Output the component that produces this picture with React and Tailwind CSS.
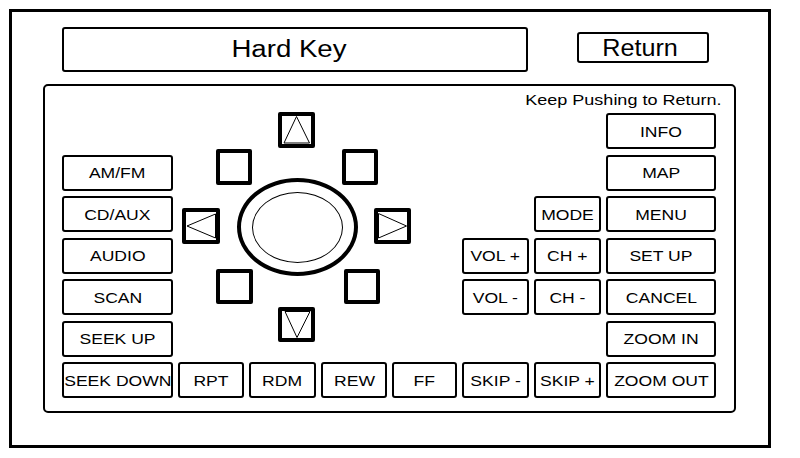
import React from 'react';

// reference art is a line drawing: black strokes on white, text a bit stretched
const Key = ({ label, className = '' }) => (
  <div className={`flex items-center justify-center rounded-[3px] border-2 border-black bg-white ${className}`}>
    <span className="inline-block scale-x-[1.17] whitespace-nowrap text-[15px] leading-none">{label}</span>
  </div>
);

const Pad = ({ className = '', children }) => (
  <div className={`absolute rounded-[2px] border-4 border-black bg-white ${className}`}>{children}</div>
);

const DPad = () => (
  <div className="relative col-span-4 col-start-2 row-span-6 row-start-1">
    <Pad className="left-[100px] top-[-1px] h-[36px] w-[37px]">
      <svg className="block h-full w-full" viewBox="0 0 29 28" fill="none" stroke="black" strokeWidth="1">
        <path d="M14.5 0.5 L2 27 L27.5 27 Z" />
      </svg>
    </Pad>
    <Pad className="left-[38px] top-[36px] h-[36px] w-[36px]" />
    <Pad className="left-[164px] top-[36px] h-[36px] w-[36px]" />
    <Pad className="left-[4px] top-[95px] h-[36px] w-[38px]">
      <svg className="block h-full w-full" viewBox="0 0 30 28" fill="none" stroke="black" strokeWidth="1">
        <path d="M1 14 L29.5 2 L29.5 26 Z" />
      </svg>
    </Pad>
    <Pad className="left-[196px] top-[95px] h-[36px] w-[37px]">
      <svg className="block h-full w-full" viewBox="0 0 29 28" fill="none" stroke="black" strokeWidth="1">
        <path d="M0.5 1.5 L28.5 14 L0.5 26 Z" />
      </svg>
    </Pad>
    <Pad className="left-[38px] top-[156px] h-[35px] w-[37px]" />
    <Pad className="left-[166px] top-[156px] h-[35px] w-[36px]" />
    <Pad className="left-[100px] top-[194px] h-[35px] w-[37px]">
      <svg className="block h-full w-full" viewBox="0 0 29 27" fill="none" stroke="black" strokeWidth="1">
        <path d="M3 0.5 L28 0.5 L15 26.5 Z" />
      </svg>
    </Pad>

    {/* centre knob */}
    <div className="absolute left-[59px] top-[65px] h-[98px] w-[121px] rounded-[50%] border-4 border-black bg-white" />
    <div className="absolute left-[74px] top-[79px] h-[71px] w-[91px] rounded-[50%] border border-black" />
  </div>
);

export default function App() {
  return (
    <div className="h-[458px] w-[800px] bg-white p-[9px] font-['Liberation_Sans',Arial,sans-serif] text-black">
      <div className="h-[439px] w-[762px] border-[3px] border-black">
        {/* header */}
        <div className="mt-[15px] flex items-start pl-[50px]">
          <div className="flex h-[45px] w-[466px] items-center justify-center rounded-[3px] border-2 border-black pr-[12px]">
            <span className="inline-block scale-x-[1.2] text-[23px] leading-none">Hard Key</span>
          </div>
          <div className="ml-[49px] mt-[5px] flex h-[31px] w-[132px] items-center justify-center rounded-[3px] border-2 border-black pr-[6px]">
            <span className="inline-block scale-x-[1.05] text-[24px] leading-none">Return</span>
          </div>
        </div>

        {/* key panel */}
        <div className="ml-[31px] mt-[12px] h-[329px] w-[693px] rounded-[5px] border-2 border-black pl-[17px] pr-[13px] pt-[5px]">
          <div className="flex justify-end">
            <span className="inline-block origin-right scale-x-[1.2] whitespace-nowrap text-[15px] leading-[17px]">
              Keep Pushing to Return.
            </span>
          </div>

          <div className="mt-[5px] grid grid-cols-[111px_66px_67px_66px_65px_67px_67px_110px] grid-rows-[repeat(7,36px)] gap-x-[5px] gap-y-[5.5px]">
            <DPad />

            <Key label="AM/FM" className="col-start-1 row-start-2" />
            <Key label="CD/AUX" className="col-start-1 row-start-3" />
            <Key label="AUDIO" className="col-start-1 row-start-4" />
            <Key label="SCAN" className="col-start-1 row-start-5" />
            <Key label="SEEK UP" className="col-start-1 row-start-6" />

            <Key label="INFO" className="col-start-8 row-start-1" />
            <Key label="MAP" className="col-start-8 row-start-2" />
            <Key label="MODE" className="col-start-7 row-start-3" />
            <Key label="MENU" className="col-start-8 row-start-3" />
            <Key label="VOL +" className="col-start-6 row-start-4" />
            <Key label="CH +" className="col-start-7 row-start-4" />
            <Key label="SET UP" className="col-start-8 row-start-4" />
            <Key label="VOL -" className="col-start-6 row-start-5" />
            <Key label="CH -" className="col-start-7 row-start-5" />
            <Key label="CANCEL" className="col-start-8 row-start-5" />
            <Key label="ZOOM IN" className="col-start-8 row-start-6" />

            <Key label="SEEK DOWN" className="col-start-1 row-start-7" />
            <Key label="RPT" className="col-start-2 row-start-7" />
            <Key label="RDM" className="col-start-3 row-start-7" />
            <Key label="REW" className="col-start-4 row-start-7" />
            <Key label="FF" className="col-start-5 row-start-7" />
            <Key label="SKIP -" className="col-start-6 row-start-7" />
            <Key label="SKIP +" className="col-start-7 row-start-7" />
            <Key label="ZOOM OUT" className="col-start-8 row-start-7" />
          </div>
        </div>
      </div>
    </div>
  );
}
